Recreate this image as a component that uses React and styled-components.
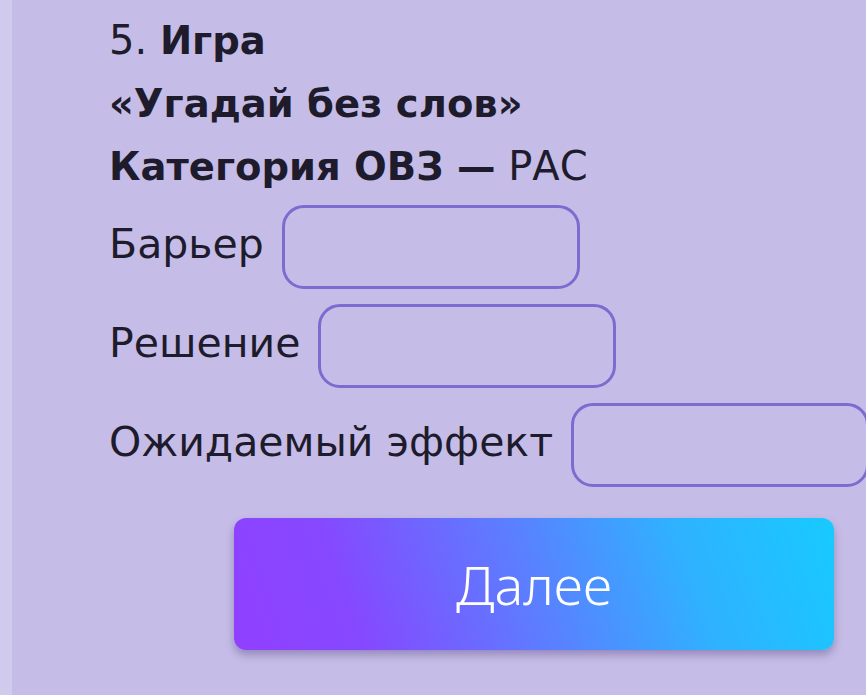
import React from "react";
import styled, { createGlobalStyle } from "styled-components";

const GlobalStyle = createGlobalStyle`
    html, body {
        margin: 0;
        padding: 0;
        background: #c5bde7;
    }
    body {
        font-family: "DejaVu Sans", "Noto Sans", sans-serif;
        color: #1e1b2c;
    }
`;

const fields = ["Барьер", "Решение", "Ожидаемый эффект"];

const App = () => {
    const [values, setValues] = React.useState({});

    const handleChange = (ev) => {
        const { name, value } = ev.target;
        setValues((prev) => ({ ...prev, [name]: value }));
    };

    return (
        <Page>
            <GlobalStyle />
            <Strip />
            <Content>
                <TitleLine>
                    5. <b>Игра</b>
                </TitleLine>
                <TitleLine>
                    <b>«Угадай без слов»</b>
                </TitleLine>
                <TitleLine>
                    <b>Категория ОВЗ —</b> РАС
                </TitleLine>

                <Fields>
                    {fields.map((label) => (
                        <FieldRow key={label}>
                            <FieldLabel>{label}</FieldLabel>
                            <FieldInput
                                name={label}
                                value={values[label] || ""}
                                onChange={handleChange}
                            />
                        </FieldRow>
                    ))}
                </Fields>

                <NextButton type="button">Далее</NextButton>
            </Content>
        </Page>
    );
};

export default App;

const Page = styled.div`
    display: flex;
    width: 866px;
    height: 695px;
    overflow: hidden;
    background: #c5bde7;
`;

const Strip = styled.div`
    width: 12px;
    flex-shrink: 0;
    background: #d0cbec;
`;

const Content = styled.div`
    display: flex;
    flex-direction: column;
    padding-left: 97px;
    padding-top: 9px;
`;

const TitleLine = styled.div`
    font-size: 40px;
    line-height: 62px;
    white-space: nowrap;
    b {
        font-size: 38.5px;
        font-weight: 700;
    }
`;

const Fields = styled.div`
    display: flex;
    flex-direction: column;
    gap: 15px;
    margin-top: 7px;
`;

const FieldRow = styled.div`
    display: flex;
    align-items: center;
    gap: 18px;
`;

const FieldLabel = styled.span`
    font-size: 41px;
    white-space: nowrap;
    margin-top: -6px;
`;

const FieldInput = styled.input`
    box-sizing: border-box;
    width: 298px;
    height: 84px;
    flex-shrink: 0;
    border: 3px solid #7e6bd0;
    border-radius: 22px;
    background: transparent;
    font-family: inherit;
    font-size: 30px;
    padding: 0 18px;
    outline: none;
`;

const NextButton = styled.button`
    margin-top: 31px;
    margin-left: 125px;
    width: 600px;
    height: 132px;
    border: none;
    border-radius: 12px;
    background: linear-gradient(70deg, #9040ff 0%, #8648ff 20%, #5a80ff 50%, #2fb2ff 75%, #17caff 100%);
    box-shadow: 0 5px 8px rgba(60, 40, 110, 0.35);
    color: #ffffff;
    font-family: "Noto Sans", "DejaVu Sans", sans-serif;
    font-weight: 300;
    font-size: 54px;
    cursor: pointer;
`;
